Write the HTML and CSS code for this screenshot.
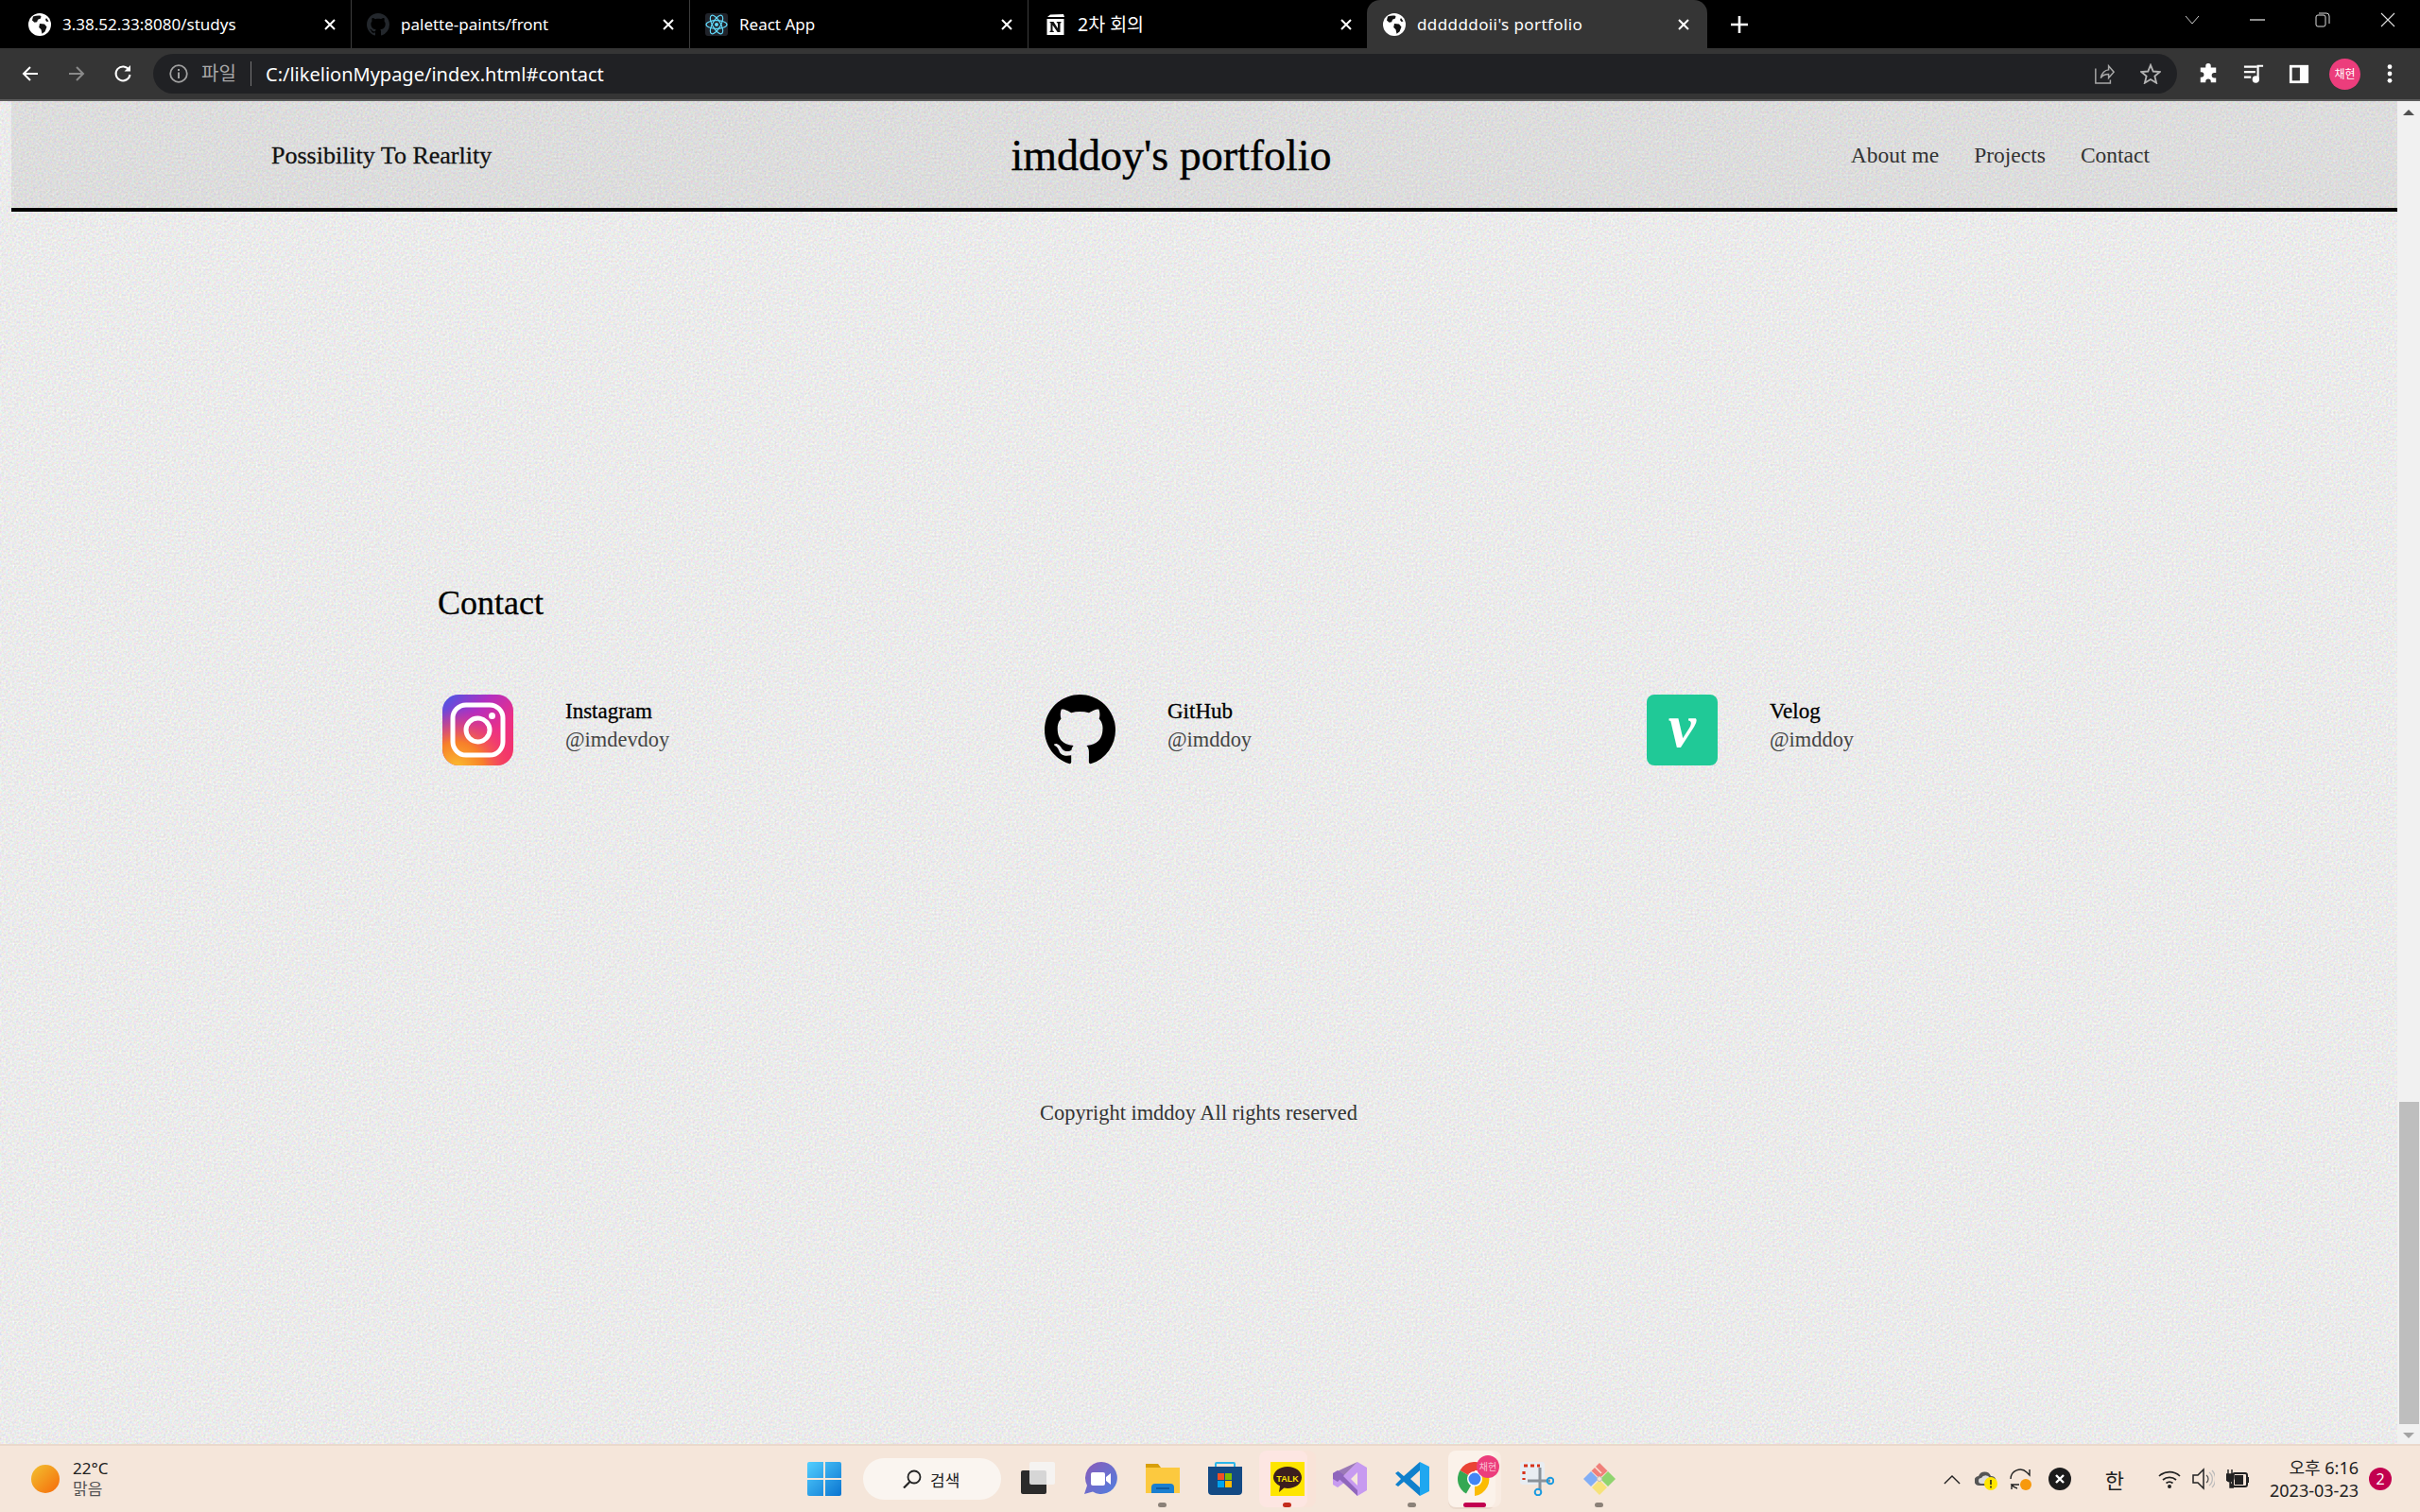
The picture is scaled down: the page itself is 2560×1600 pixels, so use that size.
FILE: index.html

```html
<!DOCTYPE html>
<html lang="ko">
<head>
  <meta charset="UTF-8" />
  <title>ddddddoii's portfolio</title>
  <link rel="stylesheet" href="styles.css">
</head>
<body>
  <svg class="defs" width="0" height="0">
    <symbol id="globe" viewBox="0 0 24 24">
      <circle cx="12" cy="12" r="12" fill="#fff"/>
      <path d="M5 3.500c3-1 6-1.400 8.500-.6l-.5 2.600-3 1.200-.8 2.500-2.700.6L4 7.500zM12 11l5 .5 2.500 3-2 5-3 2.200-1-4.500-2.300-2.200zM19 5l2.500 3.500-2 .5-1.500-2z" fill="#111"/>
    </symbol>
    <symbol id="close" viewBox="0 0 14 14">
      <path d="M2 2l10 10M12 2L2 12" stroke="#fff" stroke-width="2" fill="none"/>
    </symbol>
    <symbol id="octocat" viewBox="0 0 16 16">
      <path d="M8 0C3.580 0 0 3.580 0 8c0 3.540 2.290 6.530 5.470 7.590.4.070.55-.17.55-.38 0-.19-.01-.82-.01-1.490-2.010.37-2.530-.49-2.690-.94-.09-.23-.48-.94-.82-1.130-.28-.15-.68-.52-.01-.53.63-.01 1.080.58 1.230.82.72 1.210 1.870.87 2.330.66.07-.52.28-.87.51-1.070-1.780-.2-3.640-.89-3.640-3.950 0-.87.31-1.590.82-2.150-.08-.2-.36-1.020.08-2.120 0 0 .67-.21 2.200.82.64-.18 1.320-.27 2-.27.68 0 1.360.09 2 .27 1.530-1.040 2.200-.82 2.200-.82.44 1.100.16 1.920.08 2.120.51.56.82 1.270.82 2.150 0 3.070-1.870 3.750-3.650 3.950.29.25.54.73.54 1.480 0 1.070-.01 1.930-.01 2.200 0 .21.15.46.55.38A8.013 8.013 0 0016 8c0-4.420-3.580-8-8-8z"/>
    </symbol>
  </svg>

  <div class="tabstrip">
    <div class="tab">
      <svg class="favicon"><use href="#globe"/></svg>
      <span class="tab-title">3.38.52.33:8080/studys</span>
      <svg class="tab-close"><use href="#close"/></svg>
    </div>
    <div class="tab">
      <svg class="favicon octo"><use href="#octocat"/></svg>
      <span class="tab-title">palette-paints/front</span>
      <svg class="tab-close"><use href="#close"/></svg>
    </div>
    <div class="tab">
      <svg class="favicon" viewBox="0 0 24 24">
        <rect width="24" height="24" rx="3" fill="#20232a"/>
        <g fill="none" stroke="#61dafb" stroke-width="1.200">
          <ellipse cx="12" cy="12" rx="11" ry="4.300"/>
          <ellipse cx="12" cy="12" rx="11" ry="4.300" transform="rotate(60 12 12)"/>
          <ellipse cx="12" cy="12" rx="11" ry="4.300" transform="rotate(120 12 12)"/>
        </g>
        <circle cx="12" cy="12" r="2" fill="#61dafb"/>
      </svg>
      <span class="tab-title">React App</span>
      <svg class="tab-close"><use href="#close"/></svg>
    </div>
    <div class="tab">
      <svg class="favicon" viewBox="0 0 24 24">
        <path d="M4 4l3-2.500 14-.5 1 3z" fill="#fff"/>
        <rect x="3.500" y="6" width="18" height="17" fill="#fff"/>
        <path d="M7.500 9h3l4.500 7V10.500l-1.200-.3V9h4.700v1.200l-1 .3V20h-2.800L9.500 12.500v6l1.300.4V20H6.500v-1.100l1-.4v-8.300l-1-.4V9z" fill="#111"/>
      </svg>
      <span class="tab-title tab-title-ko">2차 회의</span>
      <svg class="tab-close"><use href="#close"/></svg>
    </div>
    <div class="tab tab-active">
      <svg class="favicon"><use href="#globe"/></svg>
      <span class="tab-title">ddddddoii's portfolio</span>
      <svg class="tab-close"><use href="#close"/></svg>
    </div>
    <svg class="newtab" viewBox="0 0 18 18"><path d="M9 0v18M0 9h18" stroke="#fff" stroke-width="2.600"/></svg>
    <div class="window-btns">
      <svg viewBox="0 0 16 10"><path d="M1 1l7 8 7-8" fill="none" stroke="#ccc" stroke-width="1"/></svg>
      <svg viewBox="0 0 16 10"><path d="M0 5h16" stroke="#ddd" stroke-width="1.300"/></svg>
      <svg viewBox="0 0 16 16"><rect x="1" y="3" width="10" height="12" rx="2" fill="none" stroke="#ddd"/><path d="M4 1h8a3 3 0 013 3v8" fill="none" stroke="#ddd"/></svg>
      <svg viewBox="0 0 16 16"><path d="M1 1l14 14M15 1L1 15" stroke="#ddd" stroke-width="1.100"/></svg>
    </div>
  </div>

  <div class="toolbar">
    <svg class="nav-btn" viewBox="0 0 20 20"><path d="M18 10H3M10 3l-7 7 7 7" fill="none" stroke="#fff" stroke-width="2"/></svg>
    <svg class="nav-btn" viewBox="0 0 20 20"><path d="M2 10h15M10 3l7 7-7 7" fill="none" stroke="#8a8a8a" stroke-width="2"/></svg>
    <svg class="nav-btn" viewBox="0 0 20 20"><path d="M16.500 6A7.500 7.500 0 1017.500 11" fill="none" stroke="#fff" stroke-width="2"/><path d="M18 1v6.500h-6.500z" fill="#fff"/></svg>
    <div class="omnibox">
      <svg class="info" viewBox="0 0 20 20"><circle cx="10" cy="10" r="8.800" fill="none" stroke="#a0a0a0" stroke-width="1.800"/><path d="M10 8.500V15M10 5v2" stroke="#a0a0a0" stroke-width="2"/></svg>
      <span class="scheme">파일</span>
      <span class="url">C:/likelionMypage/index.html#contact</span>
      <svg class="omni-icon share" viewBox="0 0 24 24"><path d="M2 6v17h17v-4M8 17c1-6 5-9.500 9-9.500V3l6 7-6 7v-4.500c-4 0-7 1-9 4.500z" fill="none" stroke="#a8a8a8" stroke-width="1.600"/></svg>
      <svg class="omni-icon" viewBox="0 0 24 24"><path d="M12 2l3 7.300 7.800.6-6 5 1.900 7.700L12 18.500l-6.700 4.100L7.200 14.900l-6-5 7.800-.6z" fill="none" stroke="#b4b4b4" stroke-width="2"/></svg>
    </div>
    <svg class="tool-btn" viewBox="0 0 24 24"><path d="M9 3a3 3 0 016 0v2h6v6h-2a3 3 0 000 6h2v5h-6v-1a3 3 0 00-6 0v1H3v-6h1a3 3 0 000-6H3V5h6z" fill="#fff"/></svg>
    <svg class="tool-btn" viewBox="0 0 24 24"><path d="M1 4h15M1 10h13M1 16h8" stroke="#fff" stroke-width="2.400"/><path d="M17 18V3h6" fill="none" stroke="#fff" stroke-width="2.400"/><circle cx="14.500" cy="18.500" r="4" fill="#fff"/></svg>
    <svg class="tool-btn panel" viewBox="0 0 24 24"><rect x="1" y="2" width="22" height="21" fill="#fff"/><rect x="4" y="5" width="9" height="15" fill="#353535"/></svg>
    <div class="avatar">채현</div>
    <svg class="tool-btn menu" viewBox="0 0 24 24"><circle cx="12" cy="4" r="2.600" fill="#fff"/><circle cx="12" cy="12" r="2.600" fill="#fff"/><circle cx="12" cy="20" r="2.600" fill="#fff"/></svg>
  </div>

  <div class="viewport">
    <div class="page">
      <header class="site-header">
        <div class="tagline">Possibility To Rearlity</div>
        <div class="site-title">imddoy's portfolio</div>
        <nav class="site-nav">
          <a>About me</a>
          <a>Projects</a>
          <a>Contact</a>
        </nav>
      </header>

      <section class="contact">
        <h2>Contact</h2>
        <div class="contact-list">
          <div class="contact-item">
            <svg class="contact-icon" viewBox="0 0 75 75">
              <defs>
                <linearGradient id="igbase" x1="0" y1="0" x2="1" y2="1">
                  <stop offset="0" stop-color="#3f5be8"/>
                  <stop offset=".35" stop-color="#b32fc0"/>
                  <stop offset=".65" stop-color="#ec2f86"/>
                  <stop offset="1" stop-color="#f5355f"/>
                </linearGradient>
                <radialGradient id="igglow" cx=".2" cy="1.050" r=".85">
                  <stop offset="0" stop-color="#fbc02d"/>
                  <stop offset=".45" stop-color="#f77f2a"/>
                  <stop offset="1" stop-color="#f5356f" stop-opacity="0"/>
                </radialGradient>
              </defs>
              <rect width="75" height="75" rx="17" fill="url(#igbase)"/>
              <rect width="75" height="75" rx="17" fill="url(#igglow)"/>
              <rect x="11" y="11" width="53" height="53" rx="14" fill="none" stroke="#fff" stroke-width="5"/>
              <circle cx="37.500" cy="37.500" r="12.500" fill="none" stroke="#fff" stroke-width="5"/>
              <circle cx="52.500" cy="22.500" r="3.500" fill="#fff"/>
            </svg>
            <div>
              <div class="contact-name">Instagram</div>
              <div class="contact-id">@imdevdoy</div>
            </div>
          </div>
          <div class="contact-item">
            <svg class="contact-icon"><use href="#octocat"/></svg>
            <div>
              <div class="contact-name">GitHub</div>
              <div class="contact-id">@imddoy</div>
            </div>
          </div>
          <div class="contact-item">
            <div class="contact-icon velog"><span>v</span></div>
            <div>
              <div class="contact-name">Velog</div>
              <div class="contact-id">@imddoy</div>
            </div>
          </div>
        </div>
      </section>

      <footer class="site-footer">Copyright imddoy All rights reserved</footer>
    </div>

    <div class="scrollbar">
      <div class="arrow-up"></div>
      <div class="thumb"></div>
      <div class="arrow-down"></div>
    </div>
  </div>

  <div class="taskbar">
    <div class="weather">
      <div class="sun"></div>
      <div>
        <div class="temp">22°C</div>
        <div class="sky">맑음</div>
      </div>
    </div>

    <div class="apps">
      <svg class="start" viewBox="0 0 36 36">
        <defs>
          <linearGradient id="winblue" x1="0" y1="0" x2="1" y2="1">
            <stop offset="0" stop-color="#52cfff"/>
            <stop offset="1" stop-color="#0a74d0"/>
          </linearGradient>
        </defs>
        <path d="M0 2a2 2 0 012-2h15v17H0zM19 0h15a2 2 0 012 2v15H19zM0 19h17v17H2a2 2 0 01-2-2zM19 19h17v15a2 2 0 01-2 2H19z" fill="url(#winblue)"/>
      </svg>
      <div class="search">
        <svg viewBox="0 0 20 20"><circle cx="12" cy="8" r="6.500" fill="none" stroke="#222" stroke-width="1.800"/><path d="M7.500 13L1 19.500" stroke="#222" stroke-width="2.200"/></svg>
        <span>검색</span>
      </div>

      <div class="app">
        <svg viewBox="0 0 36 36">
          <rect x="0" y="9" width="27" height="25" rx="2" fill="#2b2b2b"/>
          <rect x="9" y="0" width="27" height="24" rx="2" fill="#f4f4f4" fill-opacity=".85"/>
        </svg>
      </div>
      <div class="app">
        <svg viewBox="0 0 36 36">
          <defs>
            <linearGradient id="chatg" x1="0" y1="0" x2="1" y2="1">
              <stop offset="0" stop-color="#8c5bb8"/>
              <stop offset="1" stop-color="#4f7fe0"/>
            </linearGradient>
          </defs>
          <path d="M19 0a17 17 0 11-9 31.500L1 34l3-9A17 17 0 0119 0z" fill="url(#chatg)"/>
          <rect x="8" y="11" width="15" height="14" rx="2" fill="#fff"/>
          <path d="M24 16l5-4v12l-5-4z" fill="#fff"/>
        </svg>
      </div>
      <div class="app">
        <svg viewBox="0 0 36 36">
          <path d="M0 2h13l3 4h20v26H0z" fill="#d89f0a"/>
          <rect y="6" width="36" height="27" fill="#fcc93f"/>
          <path d="M6 33v-6a4 4 0 014-4h16a4 4 0 014 4v6z" fill="#1a7fd0"/>
          <path d="M11 28h14" stroke="#0c4f90" stroke-width="1.500"/>
        </svg>
        <i class="dot"></i>
      </div>
      <div class="app">
        <svg viewBox="0 0 36 36">
          <path d="M8 6V2a1 1 0 011-1h18a1 1 0 011 1v4" fill="none" stroke="#2bb6ea" stroke-width="2"/>
          <path d="M0 5h36v26a4 4 0 01-4 4H4a4 4 0 01-4-4z" fill="#134a84"/>
          <rect x="10" y="12" width="7" height="7" fill="#f25022"/>
          <rect x="18" y="12" width="7" height="7" fill="#7fba00"/>
          <rect x="10" y="20" width="7" height="7" fill="#00a4ef"/>
          <rect x="18" y="20" width="7" height="7" fill="#ffb900"/>
        </svg>
      </div>
      <div class="app app-open">
        <svg viewBox="0 0 36 36">
          <rect width="36" height="36" fill="#fee500"/>
          <path d="M18 5c8.500 0 15 5 15 11.500S26.500 28 18 28c-1.300 0-2.500-.1-3.700-.4L9 32l1-6.500C5.800 23.300 3 20 3 16.500 3 10 9.500 5 18 5z" fill="#3c1e1e"/>
          <text class="talk" x="18" y="21" text-anchor="middle">TALK</text>
        </svg>
        <i class="dot dot-kakao"></i>
      </div>
      <div class="app">
        <svg viewBox="0 0 36 36">
          <path d="M26 0l10 6v24l-10 6-14-14-7 5-5-3V12l5-3 7 5zM26 11l-7 7 7 7z" fill="#c79af0" fill-rule="evenodd"/>
          <path d="M26 0L5 21l-5-3V12l5-3 21 21v6L0 12" fill="#7c54ab" fill-opacity=".75"/>
        </svg>
      </div>
      <div class="app">
        <svg viewBox="0 0 36 36">
          <path d="M26 0l10 5v26l-10 5z" fill="#1fa7f0"/>
          <path d="M26 0L9 15 3 10 0 12l6 6-6 6 3 2 6-5 17 15v-9l-10-9 10-9z" fill="#0f80cc"/>
        </svg>
        <i class="dot"></i>
      </div>
      <div class="app app-active">
        <svg viewBox="0 0 36 36">
          <path d="M18 18L2.400 9A18 18 0 0133.600 9H18z" fill="#ea4335"/>
          <path d="M18 18l-9 15.600A18 18 0 012.400 9z" fill="#34a853"/>
          <path d="M18 18h15.600A18 18 0 019 33.600z" fill="#fbbc04" transform="rotate(-30 18 18)"/>
          <circle cx="18" cy="18" r="8" fill="#fff"/>
          <circle cx="18" cy="18" r="6.500" fill="#4285f4"/>
        </svg>
        <span class="chrome-badge">채현</span>
        <i class="dot dot-active"></i>
      </div>
      <div class="app">
        <svg viewBox="0 0 36 36">
          <rect width="26" height="24" rx="3" fill="#e8edf2"/>
          <path d="M4 4h4M11 4h4M18 4h3M4 10v3M4 17v2" stroke="#d8321a" stroke-width="3.200"/>
          <path d="M8 20h24M21 6v24" stroke="#8a9299" stroke-width="3" fill="none"/>
          <circle cx="32" cy="20" r="3.300" fill="none" stroke="#1b9be0" stroke-width="2"/>
          <circle cx="19" cy="32" r="3.300" fill="none" stroke="#1b9be0" stroke-width="2"/>
        </svg>
      </div>
      <div class="app">
        <svg viewBox="0 0 36 36">
          <path d="M18 1l8.500 8.500-8.500 8-8.500-8z" fill="#f0807a"/>
          <path d="M1 18l8-8 8 8-8 8z" fill="#82aef5"/>
          <path d="M19 18l8-8 8 8-8 8z" fill="#8fd46e"/>
          <path d="M18 19l8 8-8 8-8-8z" fill="#f6e27a"/>
          <path d="M13 5l7 7" stroke="#f5e6da" stroke-width="1.500"/>
          <circle cx="18" cy="18" r="2.500" fill="#f5e6da" stroke="#bbb"/>
        </svg>
        <i class="dot"></i>
      </div>
    </div>

    <div class="tray">
      <svg class="tray-icon chevron" viewBox="0 0 20 12"><path d="M1 11l9-9 9 9" fill="none" stroke="#222" stroke-width="1.500"/></svg>
      <svg class="tray-icon cloud" viewBox="0 0 24 24"><path d="M5 19a5 5 0 01-1-10 7 7 0 0113 0 5 5 0 011 10z" fill="#555"/><path d="M7 17a3 3 0 010-6 5 5 0 019 0 3 3 0 010 6z" fill="#ddd"/><circle cx="17" cy="17" r="7" fill="#ffe600"/><path d="M17 13v5M17 19.500v2" stroke="#222" stroke-width="1.600"/></svg>
      <svg class="tray-icon sync" viewBox="0 0 24 24"><path d="M2 12a10 10 0 0117-7l3 3V2M22 12" fill="none" stroke="#222" stroke-width="1.400"/><path d="M9 22a10 10 0 01-6-4h8M3 18v5" fill="none" stroke="#222" stroke-width="1.400"/><circle cx="18" cy="18" r="6" fill="#f7990c"/></svg>
      <svg class="tray-icon" viewBox="0 0 24 24"><circle cx="12" cy="12" r="12" fill="#1c1c1c"/><path d="M8 8l8 8M16 8l-8 8" stroke="#fff" stroke-width="2.400"/></svg>
      <span class="ime">한</span>
      <svg class="tray-icon wifi" viewBox="0 0 24 24"><path d="M1 9a16 16 0 0122 0M5 13a10.500 10.500 0 0114 0M8.500 16.500a5.500 5.500 0 017 0" fill="none" stroke="#222" stroke-width="1.700"/><circle cx="12" cy="20" r="2" fill="#222"/></svg>
      <svg class="tray-icon" viewBox="0 0 24 24"><path d="M1 8h5l6-6v20l-6-6H1z" fill="none" stroke="#222" stroke-width="1.500"/><path d="M15 8a5 5 0 010 8" fill="none" stroke="#555" stroke-width="1.300"/><path d="M18 5a9 9 0 010 14M21 3a13 13 0 010 18" fill="none" stroke="#bbb" stroke-width="1.300"/></svg>
      <svg class="tray-icon" viewBox="0 0 24 24"><path d="M2 2v5M6 2v5M0 7h8v4a4 4 0 01-8 0zM4 14v7h4" fill="#222" stroke="#222" stroke-width="1.400"/><rect x="7" y="6" width="15" height="14" rx="2" fill="none" stroke="#222" stroke-width="2"/><rect x="9" y="8" width="9" height="10" fill="#222"/><rect x="22" y="10" width="2" height="6" fill="#222"/></svg>
      <div class="clock">
        <div>오후 6:16</div>
        <div>2023-03-23</div>
      </div>
      <div class="notif">2</div>
    </div>
  </div>
</body>
</html>
```

FILE: styles.css

```css
* {
  box-sizing: border-box;
}

body {
  display: flex;
  flex-direction: column;
  height: 1600px;
  margin: 0;
  overflow: hidden;
  background: #000;
  font-family: "Noto Sans", "Noto Sans CJK KR", sans-serif;
}

.defs {
  position: absolute;
}

/* browser chrome */
.tabstrip {
  display: flex;
  align-items: stretch;
  height: 51px;
  padding-left: 14px;
  background: #000;
  color: #fff;
}

.tab {
  display: flex;
  align-items: center;
  width: 358px;
  padding: 0 15px 0 16px;
  border-right: 1px solid #3c3c3c;
  background-clip: padding-box;
}

.tab:nth-child(4) {
  border-right: 0;
}

.tab-active {
  width: 360px;
  padding: 0 18px 0 17px;
  border-right: 0;
  border-radius: 14px 14px 0 0;
  background: #353535;
}

.favicon {
  flex: none;
  width: 24px;
  height: 24px;
}

.favicon.octo {
  fill: #23272c;
}

.tab-title {
  flex: 1;
  margin-left: 12px;
  font-size: 17px;
  white-space: nowrap;
}

.tab-title-ko {
  margin-bottom: 2px;
  font-size: 19.5px;
}

.tab-active .tab-title {
  letter-spacing: 0.4px;
}

.tab-close {
  flex: none;
  width: 14px;
  height: 14px;
}

.newtab {
  align-self: center;
  width: 18px;
  height: 18px;
  margin-left: 25px;
}

.window-btns {
  display: flex;
  gap: 53px;
  align-items: center;
  height: 42px;
  margin-left: auto;
  padding-right: 26px;
}

.window-btns svg {
  width: 16px;
  height: 16px;
}

.toolbar {
  display: flex;
  align-items: center;
  height: 56px;
  padding-left: 22px;
  border-bottom: 2px solid #5c5c5c;
  background: #353535;
  color: #fff;
}

.nav-btn {
  width: 20px;
  height: 20px;
  margin-right: 29px;
}

.nav-btn:nth-child(3) {
  margin-right: 22px;
}

.omnibox {
  display: flex;
  align-items: center;
  width: 2141px;
  height: 42px;
  margin-right: 22px;
  padding: 0 17px 0 17px;
  border-radius: 21px;
  background: #202124;
}

.info {
  width: 20px;
  height: 20px;
}

.scheme {
  width: 53px;
  margin-left: 14px;
  border-right: 1px solid #777;
  color: #a8a8a8;
  font-size: 20px;
  line-height: 26px;
}

.url {
  flex: 1;
  margin-left: 15px;
  font-size: 20px;
}

.omni-icon {
  width: 22px;
  height: 22px;
  margin-left: 27px;
}

.tool-btn {
  width: 22px;
  height: 22px;
  margin-right: 26px;
}

.tool-btn.panel {
  margin-right: 21px;
}

.menu {
  margin-right: 0;
  margin-left: 2px;
}

.avatar {
  width: 33px;
  height: 33px;
  margin-right: 18px;
  border-radius: 50%;
  background: #ec3d7c;
  font-size: 12px;
  line-height: 33px;
  text-align: center;
}

/* page */
.viewport {
  display: flex;
  flex: 1;
  min-height: 0;
}

.page {
  flex: 1;
  padding-left: 12px;
  background-color: #ebebeb;
  background-image: url("data:image/svg+xml,%3Csvg xmlns='http://www.w3.org/2000/svg' width='400' height='400'%3E%3Cfilter id='n' color-interpolation-filters='sRGB'%3E%3CfeTurbulence type='fractalNoise' baseFrequency='.45' numOctaves='2' stitchTiles='stitch'/%3E%3CfeColorMatrix values='.22 0 0 0 .81 0 .22 0 0 .81 0 0 .22 0 .81 0 0 0 0 1'/%3E%3C/filter%3E%3Crect width='400' height='400' filter='url(%23n)'/%3E%3C/svg%3E");
  font-family: "Liberation Serif", serif;
  color: #111;
}

.site-header {
  display: flex;
  justify-content: space-between;
  align-items: center;
  height: 117px;
  padding: 2px 262px 0 275px;
  border-bottom: 4px solid #000;
  background: rgba(0, 0, 0, 0.06);
}

.tagline {
  font-size: 26px;
  color: #111;
  -webkit-text-stroke: 0.3px #111;
}

.site-title {
  font-size: 46px;
  color: #000;
  -webkit-text-stroke: 0.4px #000;
}

.site-nav {
  display: flex;
  gap: 37px;
  font-size: 23.5px;
  color: #333;
}

.contact {
  padding: 392px 0 0 451px;
}

.contact h2 {
  margin: 0;
  font-size: 36px;
  font-weight: normal;
  line-height: 44px;
  color: #000;
  -webkit-text-stroke: 0.3px #000;
}

.contact-list {
  display: grid;
  grid-template-columns: repeat(3, 637px);
  margin-top: 75px;
  padding-left: 5px;
}

.contact-item {
  display: flex;
  gap: 55px;
}

.contact-icon {
  flex: none;
  width: 75px;
  height: 75px;
}

.contact-name {
  margin-top: 3px;
  font-size: 23px;
  line-height: 30px;
  color: #000;
  -webkit-text-stroke: 0.3px #000;
}

.contact-id {
  font-size: 22.400px;
  line-height: 30px;
  color: #444;
}

.velog {
  border-radius: 8px;
  background: #20c997;
  color: #fff;
  font-size: 66px;
  font-style: italic;
  font-weight: bold;
  line-height: 66px;
  text-align: center;
}

.site-footer {
  margin-top: 353px;
  padding-right: 12px;
  font-size: 22.400px;
  line-height: 30px;
  text-align: center;
  color: #333;
}

/* scrollbar */
.scrollbar {
  display: flex;
  flex: none;
  flex-direction: column;
  align-items: center;
  width: 24px;
  padding: 9px 0 6px;
  background: #f1f1f1;
}

.arrow-up {
  width: 0;
  height: 0;
  border-right: 6px solid transparent;
  border-bottom: 6px solid #505050;
  border-left: 6px solid transparent;
}

.thumb {
  width: 21px;
  height: 341px;
  margin-top: auto;
  background: #bebebe;
}

.arrow-down {
  width: 0;
  height: 0;
  margin-top: 9px;
  border-top: 6px solid #a3a3a3;
  border-right: 6px solid transparent;
  border-left: 6px solid transparent;
}

/* taskbar */
.taskbar {
  display: flex;
  flex: none;
  align-items: center;
  height: 72px;
  border-top: 2px solid #ead9cc;
  background: #f5e6da;
  color: #222;
}

.weather {
  display: flex;
  flex: none;
  align-items: center;
  gap: 14px;
  width: 854px;
  padding-left: 33px;
}

.sun {
  width: 30px;
  height: 30px;
  border-radius: 50%;
  background: linear-gradient(135deg, #f2c230, #f66a0a);
}

.temp {
  font-size: 17px;
  line-height: 22px;
}

.sky {
  font-size: 17px;
  line-height: 22px;
  color: #555;
}

.apps {
  display: flex;
  align-items: center;
}

.start {
  width: 36px;
  height: 36px;
}

.search {
  display: flex;
  align-items: center;
  gap: 9px;
  width: 146px;
  height: 44px;
  margin: 0 6px 0 23px;
  padding-left: 42px;
  border-radius: 22px;
  background: #faf5f0;
  font-size: 17px;
}

.search svg {
  width: 20px;
  height: 20px;
}

.app {
  position: relative;
  display: flex;
  align-items: center;
  justify-content: center;
  width: 66px;
  height: 60px;
}

.app svg {
  position: relative;
  width: 36px;
  height: 36px;
}

/* stacked window look behind running apps */
.app-open::before,
.app-active::before {
  content: "";
  position: absolute;
  top: 0;
  bottom: 0;
  left: 3px;
  width: 51px;
  border-radius: 8px;
  background: #fde6e2;
  box-shadow: 9px 0 0 #f9e3d8;
}

.app-active::before {
  left: 5px;
  width: 50px;
  background: #fbf2ea;
  box-shadow: 6px 0 0 #f9ece2, 0 2px 0 #ead9cc;
}

.talk {
  font-family: "Liberation Sans", sans-serif;
  font-size: 9px;
  font-weight: bold;
  fill: #fee500;
}

.chrome-badge {
  position: absolute;
  top: 5px;
  left: 35px;
  width: 24px;
  height: 24px;
  border-radius: 50%;
  background: #ec3d7c;
  color: #f9c0d4;
  font-size: 10px;
  line-height: 24px;
  text-align: center;
}

.dot {
  position: absolute;
  bottom: 0;
  left: 28px;
  width: 9px;
  height: 5px;
  border-radius: 3px;
  background: #8b8178;
}

.dot-kakao {
  background: #c42b1c;
}

.dot-active {
  left: 21px;
  width: 24px;
  background: #c2004f;
}

.tray {
  display: flex;
  align-items: center;
  margin-left: auto;
  padding-right: 30px;
}

.tray-icon {
  width: 24px;
  height: 24px;
  margin-right: 12px;
}

.chevron {
  width: 18px;
  height: 11px;
  margin-right: 15px;
}

.sync {
  margin-right: 18px;
}

.ime {
  margin: 0 36px 0 24px;
  font-size: 22px;
}

.clock {
  margin-left: 10px;
  font-size: 18px;
  line-height: 24px;
  text-align: right;
}

.notif {
  width: 24px;
  height: 24px;
  margin-left: 11px;
  border-radius: 50%;
  background: #c2004f;
  color: #fff;
  font-size: 16px;
  line-height: 24px;
  text-align: center;
}
```
